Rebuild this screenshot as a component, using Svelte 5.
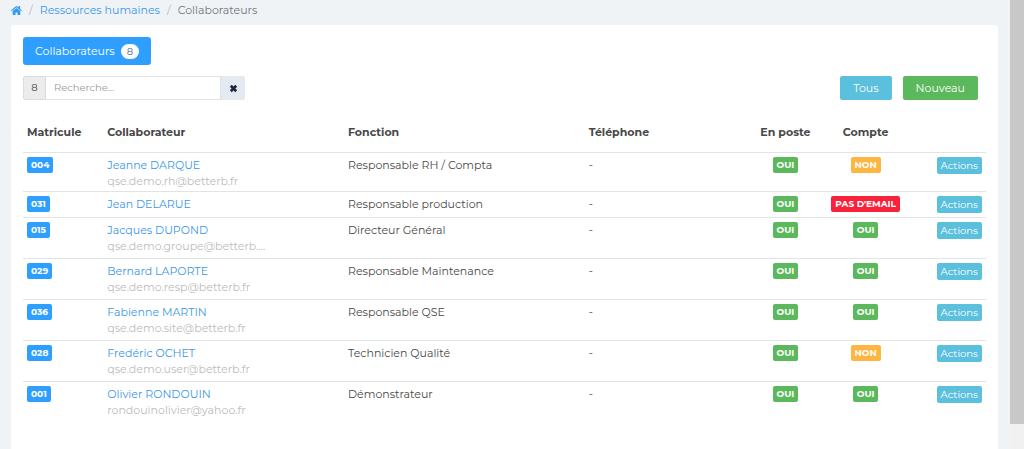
<script lang="ts">
    type Employee = {
        id: string;
        name: string;
        email?: string;
        job: string;
        phone?: string;
        account: 'OUI' | 'NON' | "PAS D'EMAIL";
    };

    const employees: Employee[] = [
        { id: '004', name: 'Jeanne DARQUE', email: 'qse.demo.rh@betterb.fr', job: 'Responsable RH / Compta', account: 'NON' },
        { id: '031', name: 'Jean DELARUE', job: 'Responsable production', account: "PAS D'EMAIL" },
        { id: '015', name: 'Jacques DUPOND', email: 'qse.demo.groupe@betterb....', job: 'Directeur Général', account: 'OUI' },
        { id: '029', name: 'Bernard LAPORTE', email: 'qse.demo.resp@betterb.fr', job: 'Responsable Maintenance', account: 'OUI' },
        { id: '036', name: 'Fabienne MARTIN', email: 'qse.demo.site@betterb.fr', job: 'Responsable QSE', account: 'OUI' },
        { id: '028', name: 'Fredéric OCHET', email: 'qse.demo.user@betterb.fr', job: 'Technicien Qualité', account: 'NON' },
        { id: '001', name: 'Olivier RONDOUIN', email: 'rondouinolivier@yahoo.fr', job: 'Démonstrateur', account: 'OUI' },
    ];

    const accountColors = { OUI: 'success', NON: 'warning', "PAS D'EMAIL": 'danger' };

    let search = '';
</script>

<div class="layout">
    <main>
        <nav class="breadcrumbs" aria-label="breadcrumb">
            <a href="#accueil" aria-label="Accueil">
                <svg class="home" viewBox="0 0 22 18" aria-hidden="true">
                    <path d="M11 3.800 3.400 10V17a1 1 0 0 0 1 1H9v-5h4v5h4.600a1 1 0 0 0 1-1v-7z" />
                    <path d="M21.600 8.700 18.400 6V.8a.6.6 0 0 0-.6-.6h-2.200a.6.6 0 0 0-.6.6v2.400L12.200.7a1.800 1.800 0 0 0-2.400 0L.4 8.700a.5.5 0 0 0 0 .6l.7.9a.5.5 0 0 0 .7 0L11 2.600l9.200 7.600a.5.5 0 0 0 .7 0l.7-.9a.5.5 0 0 0 0-.6z" />
                </svg>
            </a>
            <span class="separator">/</span>
            <a href="#rh">Ressources humaines</a>
            <span class="separator">/</span>
            <span aria-current="page">Collaborateurs</span>
        </nav>

        <section class="card">
            <button class="tab">Collaborateurs <span class="pill">8</span></button>

            <div class="toolbar">
                <div class="search">
                    <span class="addon">8</span>
                    <input type="text" placeholder="Recherche..." aria-label="Recherche" bind:value={search} />
                    <button class="clear" aria-label="Effacer" on:click={() => (search = '')}>
                        <svg viewBox="0 0 10 10" aria-hidden="true">
                            <path d="M2 2l6 6M8 2l-6 6" />
                        </svg>
                    </button>
                </div>
                <div class="buttons">
                    <button class="btn info">Tous</button>
                    <button class="btn success">Nouveau</button>
                </div>
            </div>

            <table>
                <thead>
                    <tr>
                        <th class="narrow">Matricule</th>
                        <th class="wide">Collaborateur</th>
                        <th class="wide">Fonction</th>
                        <th>Téléphone</th>
                        <th class="narrow center">En poste</th>
                        <th class="narrow center">Compte</th>
                        <th class="narrow" aria-label="Actions"></th>
                    </tr>
                </thead>
                <tbody>
                    {#each employees as employee (employee.id)}
                        <tr>
                            <td><span class="badge primary">{employee.id}</span></td>
                            <td>
                                <a href="#{employee.id}">{employee.name}</a>
                                {#if employee.email}
                                    <div class="email">{employee.email}</div>
                                {/if}
                            </td>
                            <td>{employee.job}</td>
                            <td>{employee.phone ?? '-'}</td>
                            <td class="center"><span class="badge success">OUI</span></td>
                            <td class="center">
                                <span class="badge {accountColors[employee.account]}">{employee.account}</span>
                            </td>
                            <td class="right"><button class="action info">Actions</button></td>
                        </tr>
                    {/each}
                </tbody>
            </table>
        </section>
    </main>
    <div class="scroll-track"><div class="scroll-thumb"></div></div>
</div>

<style>
    :global(body) {
        background: #eff3f6;
    }

    .layout {
        display: flex;
        min-height: 100vh;
        font-family: Montserrat, Inter, sans-serif;
        font-size: 11px;
        line-height: 16px;
        color: #484848;
    }

    main {
        flex: 1;
        min-width: 0;
        display: flex;
        flex-direction: column;
        padding: 0 12px 0 11px;
    }

    a {
        color: #3b97e8;
        text-decoration: none;
    }

    a:hover {
        text-decoration: underline;
    }

    button,
    input {
        font: inherit;
        border: 0;
        box-sizing: border-box;
    }

    button {
        cursor: pointer;
        color: #fff;
    }

    .breadcrumbs {
        display: flex;
        align-items: center;
        height: 20px;
        margin-bottom: 5px;
        color: #6f757b;
    }

    .home {
        display: block;
        width: 11px;
        height: 9px;
        fill: #2f9bf5;
    }

    .separator {
        margin: 0 7px;
        color: #b4b9be;
    }

    .card {
        flex: 1;
        padding: 12px 12px 24px;
        background: #fff;
        border-radius: 3px 3px 0 0;
    }

    .tab {
        display: flex;
        align-items: center;
        gap: 6px;
        height: 28px;
        padding: 0 12px;
        background: #2f9fff;
        border-radius: 3px;
    }

    .pill {
        padding: 0 6px;
        font-size: 10px;
        line-height: 15px;
        color: #3a6f9f;
        background: #fff;
        border-radius: 8px;
    }

    .toolbar {
        display: flex;
        justify-content: space-between;
        margin: 11px 8px 0 0;
    }

    .search {
        display: flex;
        height: 24px;
    }

    .addon {
        box-sizing: border-box;
        width: 23px;
        font-size: 10px;
        line-height: 22px;
        text-align: center;
        background: #ececec;
        border: 1px solid #dcdcdc;
        border-radius: 2px 0 0 2px;
    }

    input {
        width: 175px;
        padding: 0 8px;
        font-size: 10px;
        color: #484848;
        background: #fff;
        border: 1px solid #e2e2e2;
        border-left: 0;
    }

    input::placeholder {
        color: #999;
    }

    .clear {
        display: flex;
        align-items: center;
        justify-content: center;
        width: 24px;
        padding: 0;
        background: #e5e9f2;
        border-radius: 0 2px 2px 0;
    }

    .clear svg {
        width: 9px;
        height: 9px;
        fill: none;
        stroke: #1c2840;
        stroke-width: 3;
    }

    .buttons {
        display: flex;
        gap: 11px;
    }

    .btn {
        height: 24px;
        padding: 0 13px;
        border-radius: 2px;
    }

    table {
        width: 100%;
        margin-top: 19px;
        table-layout: fixed;
        border-collapse: separate;
        border-spacing: 0;
    }

    th {
        height: 33px;
        padding: 0 4px 8px;
        box-sizing: border-box;
        text-align: left;
        vertical-align: middle;
        font-weight: 700;
    }

    td {
        padding: 4px;
        vertical-align: top;
        line-height: 17px;
        border-top: 1px solid #e1e4e6;
    }

    tbody tr:first-child td {
        padding-bottom: 2px;
    }

    .narrow {
        width: calc(100% / 12);
    }

    .wide {
        width: 25%;
    }

    .center {
        text-align: center;
    }

    .right {
        text-align: right;
    }

    .email {
        overflow: hidden;
        line-height: 15px;
        color: #bcbcbc;
        white-space: nowrap;
        text-overflow: ellipsis;
    }

    .badge {
        display: inline-block;
        padding: 0 4px;
        font-size: 9px;
        font-weight: 700;
        line-height: 16px;
        color: #fff;
        vertical-align: top;
        white-space: nowrap;
        border-radius: 2px;
    }

    .action {
        display: inline-block;
        height: 17px;
        padding: 0 4px;
        font-size: 10px;
        line-height: 17px;
        vertical-align: top;
        border-radius: 2px;
    }

    .primary {
        background: #2f9fff;
    }

    .info {
        background: #5bc0de;
    }

    .success {
        background: #5cb85c;
    }

    .warning {
        background: #ffb541;
    }

    .danger {
        background: #fa213b;
    }

    .scroll-track {
        width: 14px;
        background: #f1f1f1;
    }

    .scroll-thumb {
        height: 94.5%;
        background: #c8c8c8;
    }
</style>
